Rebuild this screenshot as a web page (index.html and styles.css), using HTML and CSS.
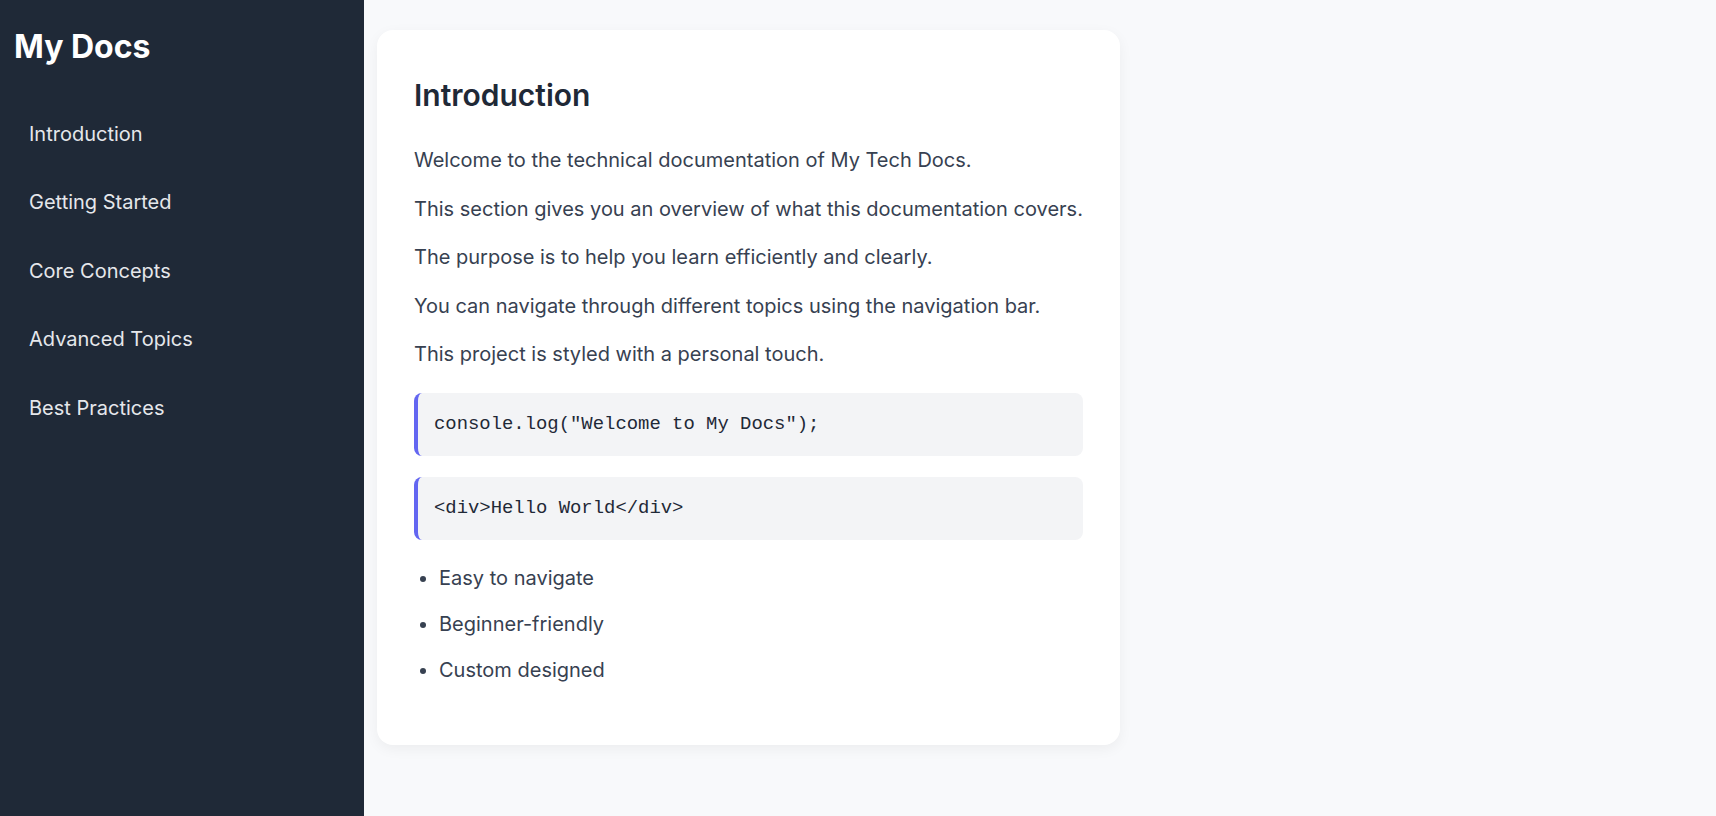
FILE: index.html
```html
<!DOCTYPE html>
<html lang="en">
<head>
<meta charset="utf-8">
<title>My Docs</title>
<link rel="stylesheet" href="styles.css">
</head>
<body>
<div class="layout">
  <nav class="sidebar">
    <h1 class="brand">My Docs</h1>
    <ul class="nav-list">
      <li><a class="nav-link" href="#introduction">Introduction</a></li>
      <li><a class="nav-link" href="#getting-started">Getting Started</a></li>
      <li><a class="nav-link" href="#core-concepts">Core Concepts</a></li>
      <li><a class="nav-link" href="#advanced-topics">Advanced Topics</a></li>
      <li><a class="nav-link" href="#best-practices">Best Practices</a></li>
    </ul>
  </nav>
  <main class="main">
    <section class="card" id="introduction">
      <h2 class="card-title">Introduction</h2>
      <p>Welcome to the technical documentation of My Tech Docs.</p>
      <p>This section gives you an overview of what this documentation covers.</p>
      <p>The purpose is to help you learn efficiently and clearly.</p>
      <p>You can navigate through different topics using the navigation bar.</p>
      <p>This project is styled with a personal touch.</p>
      <pre class="code"><code>console.log("Welcome to My Docs");</code></pre>
      <pre class="code"><code>&lt;div&gt;Hello World&lt;/div&gt;</code></pre>
      <ul class="features">
        <li>Easy to navigate</li>
        <li>Beginner-friendly</li>
        <li>Custom designed</li>
      </ul>
    </section>
  </main>
</div>
</body>
</html>
```

FILE: styles.css
```css
* { box-sizing: border-box; }

html, body {
  margin: 0;
  padding: 0;
  height: 100%;
}

body {
  font-family: Inter, "Noto Sans", sans-serif;
  background: #f8f9fb;
  color: #374151;
}

.layout {
  display: flex;
  min-height: 100%;
}

.sidebar {
  width: 364px;
  flex-shrink: 0;
  background: #1f2937;
  color: #ffffff;
  padding: 28px 14px;
}

.brand {
  margin: 0;
  font-size: 32px;
  font-weight: 700;
  line-height: 38.7px;
  color: #ffffff;
}

.nav-list {
  list-style: none;
  margin: 33px 0 0;
  padding: 0;
}

.nav-link {
  display: block;
  padding: 20px 15px;
  line-height: 28.5px;
  font-size: 20px;
  color: #e5e7eb;
  text-decoration: none;
}

.main {
  flex: 1;
  padding: 30px 13px;
}

.card {
  width: 743px;
  background: #ffffff;
  border-radius: 16px;
  padding: 37px;
  box-shadow: 0 4px 14px rgba(0, 0, 0, 0.05);
}

.card-title {
  margin: 10px 0 31px;
  font-size: 30px;
  font-weight: 600;
  line-height: 1.2;
  color: #1f2937;
}

.card p {
  margin: 16.5px 0;
  font-size: 20px;
  line-height: 32px;
}

.code {
  margin: 23px 0 20px;
  background: #f3f4f6;
  border-left: 4px solid #6366f1;
  border-radius: 8px;
  padding: 16px;
  font-family: "Liberation Mono", "Courier New", monospace;
  font-size: 18.9px;
  line-height: 31px;
  color: #1f2937;
  white-space: pre;
}

.code + .code {
  margin-top: 21px;
}

.code code {
  font-family: inherit;
  font-size: inherit;
}

.features {
  margin: 22px 0 22px;
  padding-left: 25px;
  font-size: 20px;
  line-height: 32px;
}

.features li {
  margin: 14px 0;
}
```
